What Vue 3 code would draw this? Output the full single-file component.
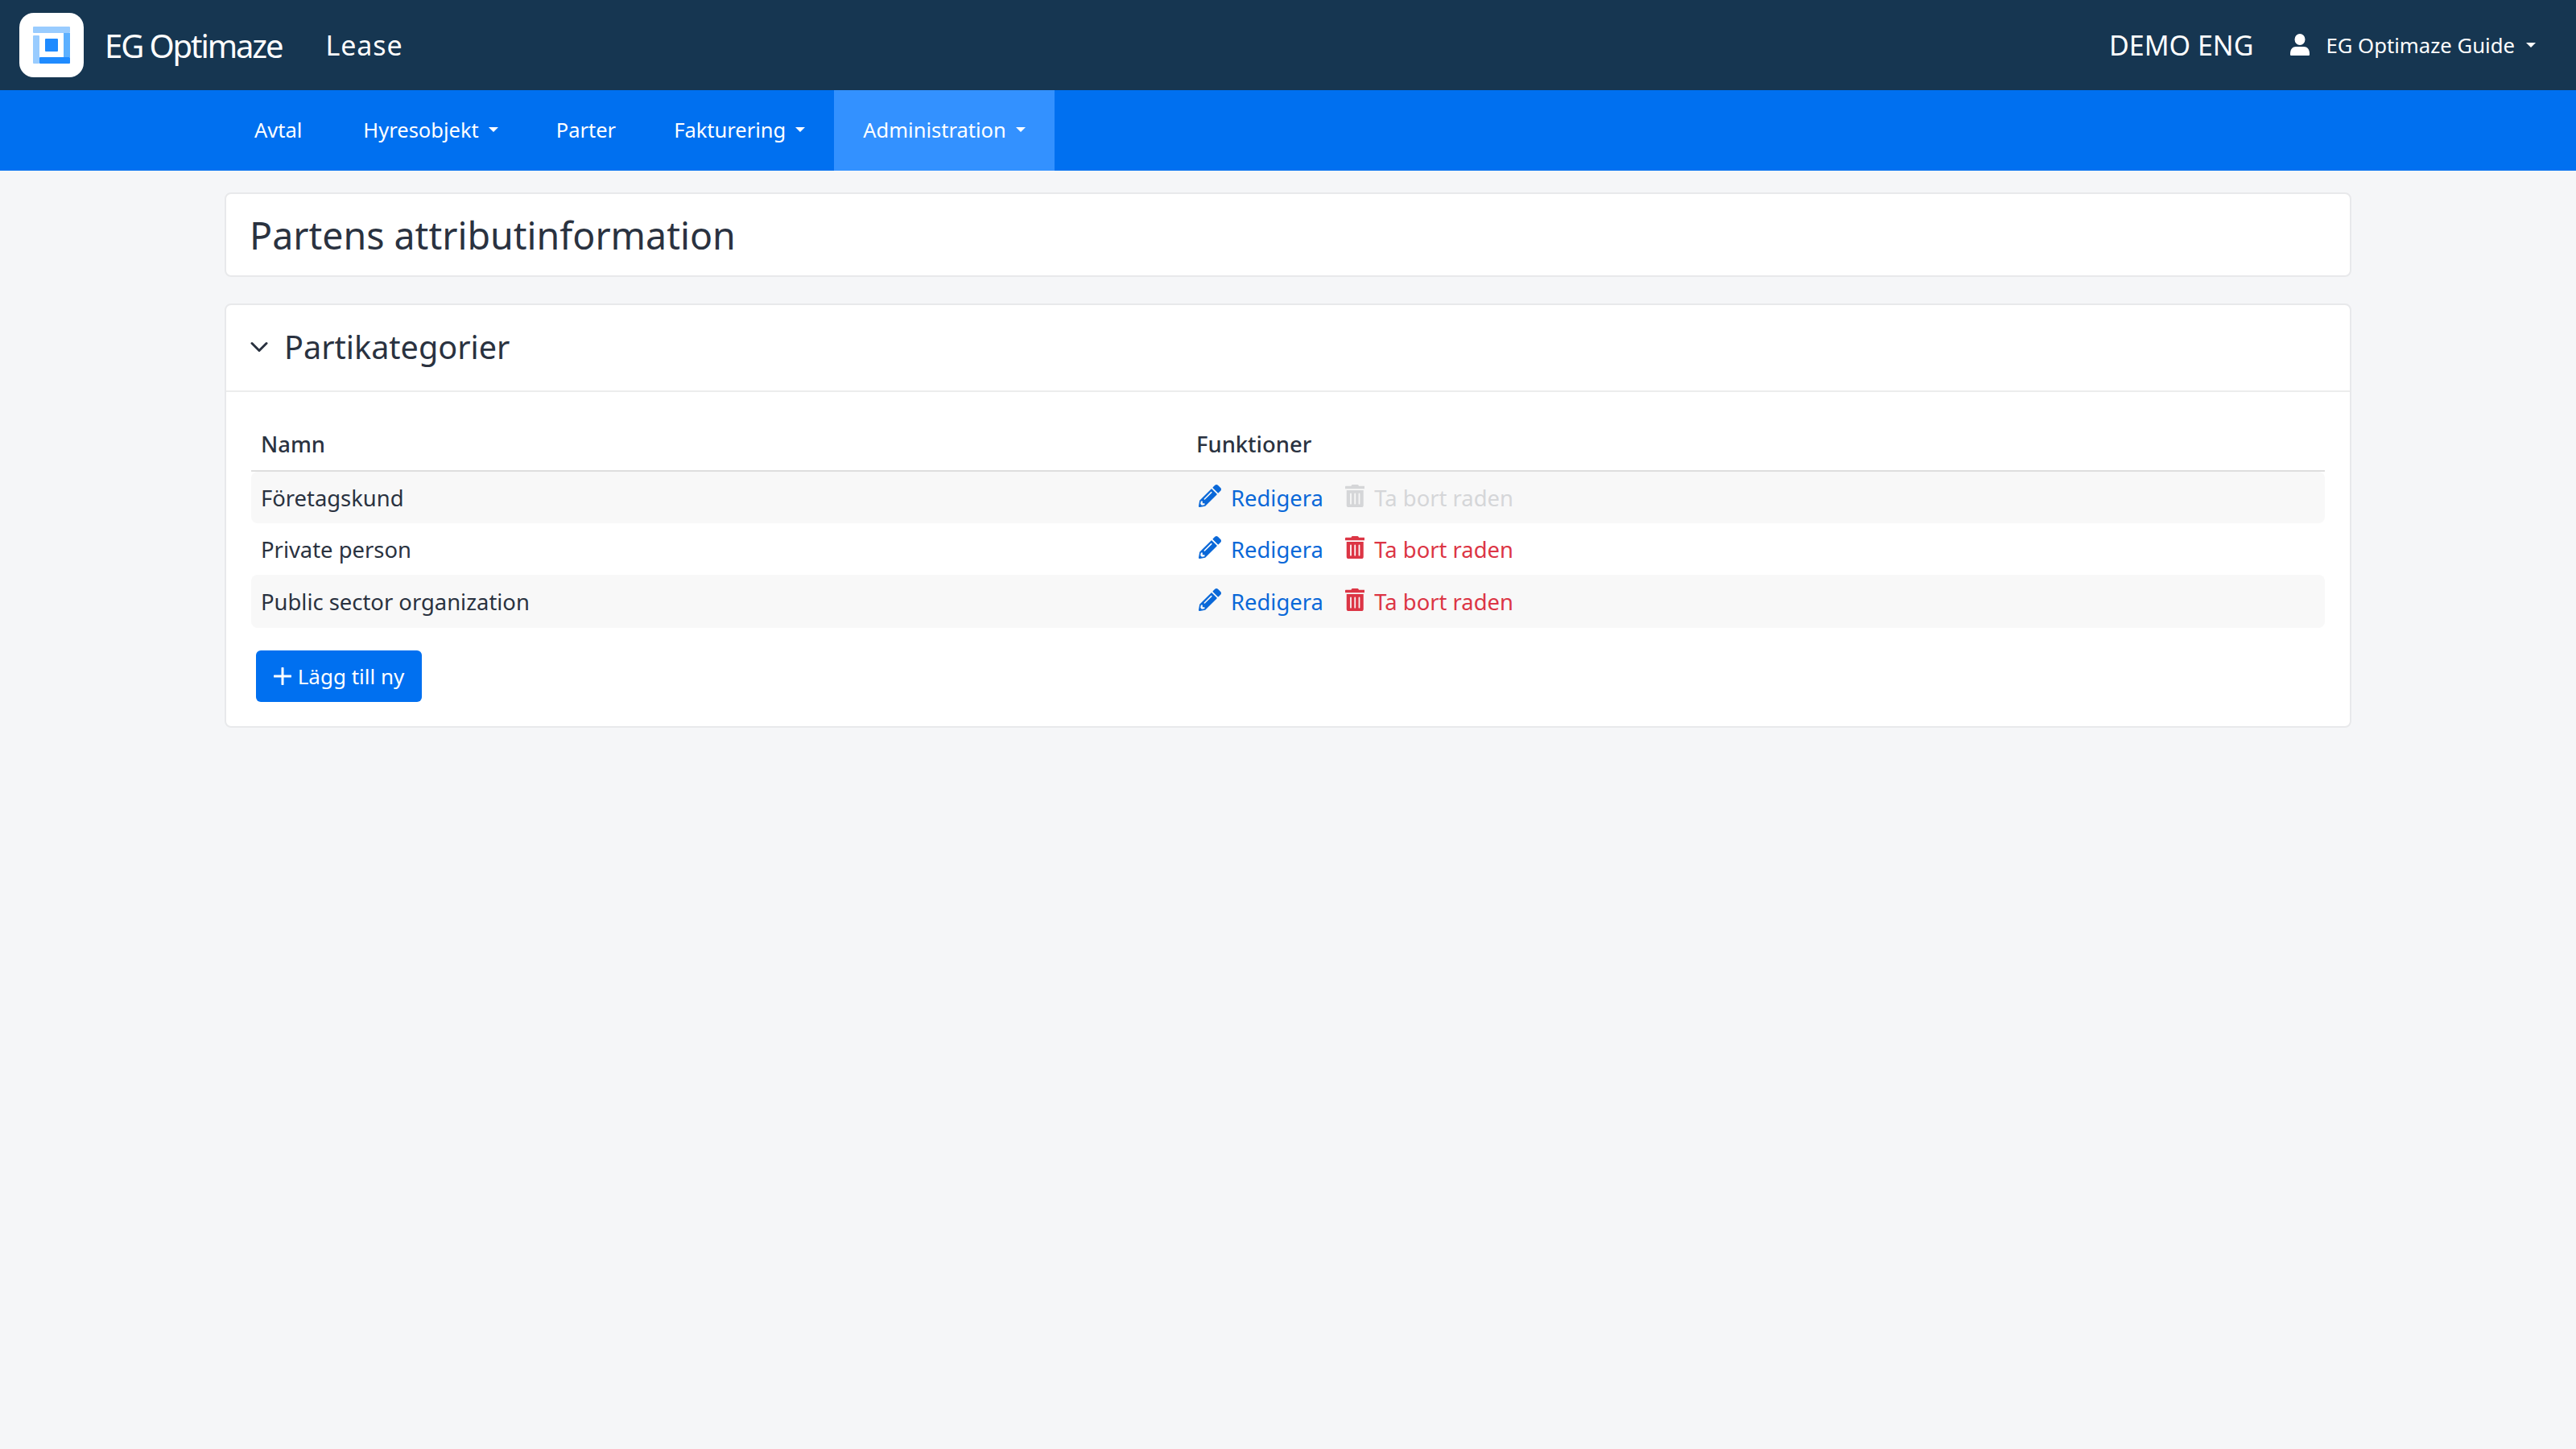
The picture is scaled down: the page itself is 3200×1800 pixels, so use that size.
<template>
  <div class="page">
    <header class="topbar">
      <div class="brand">
        <div class="logo">
          <svg width="46" height="46" viewBox="0 0 46 46">
            <rect x="0" y="0" width="46" height="8" rx="1" fill="#99ccff" />
            <rect x="0" y="11" width="8" height="35" rx="1" fill="#99ccff" />
            <rect x="38" y="8" width="8" height="30" fill="#5cb0ff" />
            <rect x="8" y="38" width="38" height="8" rx="1" fill="#1f8bff" />
            <rect x="15" y="15" width="16" height="16" rx="1" fill="#1f8bff" />
          </svg>
        </div>
        <span class="brand-name">EG Optimaze</span>
        <span class="product">Lease</span>
      </div>
      <div class="top-right">
        <span class="tenant">DEMO ENG</span>
        <svg class="user-icon" width="24" height="28" viewBox="0 0 24 28">
          <ellipse cx="12" cy="7" rx="6.5" ry="7" fill="#fff" />
          <path d="M1 27c-1 0-1-1-1-2 0-6 3-9 7-9h10c4 0 7 3 7 9 0 1 0 2-1 2z" fill="#fff" />
        </svg>
        <span class="user-name">EG Optimaze Guide</span>
        <span class="caret user-caret"></span>
      </div>
    </header>

    <nav class="mainnav">
      <a v-for="item in navItems" :key="item.label" class="nav-item" :class="{ active: item.active }">
        {{ item.label }}
        <span v-if="item.menu" class="caret"></span>
      </a>
    </nav>

    <main class="content">
      <section class="card title-card">
        <h1>Partens attributinformation</h1>
      </section>

      <section class="card">
        <div class="card-head">
          <svg class="chevron" width="22" height="14" viewBox="0 0 22 14">
            <path d="M2 2.5l9 9 9-9" fill="none" stroke="#2a3240" stroke-width="3" stroke-linecap="round" stroke-linejoin="round" />
          </svg>
          <h2>Partikategorier</h2>
        </div>
        <div class="card-body">
          <div class="row head-row">
            <div class="col-name">Namn</div>
            <div class="col-func">Funktioner</div>
          </div>
          <div v-for="row in rows" :key="row.name" class="row">
            <div class="col-name">{{ row.name }}</div>
            <div class="col-func">
              <a class="action edit">
                <svg width="28" height="28" viewBox="0 0 512 512">
                  <path fill="currentColor" d="M497.9 142.1l-46.1 46.1c-4.7 4.7-12.3 4.7-17 0l-111-111c-4.7-4.7-4.7-12.3 0-17l46.1-46.1c18.7-18.7 49.1-18.7 67.9 0l60.1 60.1c18.8 18.7 18.8 49.1 0 67.9zM284.2 99.8L21.6 362.4.4 483.9c-2.9 16.4 11.4 30.6 27.8 27.8l121.5-21.3 262.6-262.6c4.7-4.7 4.7-12.3 0-17l-111-111c-4.8-4.7-12.4-4.7-17.1 0zM124.1 339.9c-5.5-5.5-5.5-14.3 0-19.8l154-154c5.5-5.5 14.3-5.5 19.8 0s5.5 14.3 0 19.8l-154 154c-5.5 5.5-14.3 5.5-19.8 0zM88 424h48v36.3l-64.5 11.3-31.1-31.1L51.7 376H88v48z" />
                </svg>
                Redigera
              </a>
              <a class="action remove" :class="{ disabled: row.locked }">
                <svg width="24.5" height="28" viewBox="0 0 448 512">
                  <path fill="currentColor" d="M32 464a48 48 0 0 0 48 48h288a48 48 0 0 0 48-48V128H32zm272-256a16 16 0 0 1 32 0v224a16 16 0 0 1-32 0zm-96 0a16 16 0 0 1 32 0v224a16 16 0 0 1-32 0zm-96 0a16 16 0 0 1 32 0v224a16 16 0 0 1-32 0zM432 32H312l-9.4-18.7A24 24 0 0 0 281.1 0H166.8a23.72 23.72 0 0 0-21.4 13.3L136 32H16A16 16 0 0 0 0 48v32a16 16 0 0 0 16 16h416a16 16 0 0 0 16-16V48a16 16 0 0 0-16-16z" />
                </svg>
                Ta bort raden
              </a>
            </div>
          </div>
          <button class="add-btn">
            <svg width="22" height="22" viewBox="0 0 22 22">
              <path d="M11 1v20M1 11h20" stroke="#fff" stroke-width="3" stroke-linecap="round" />
            </svg>
            Lägg till ny
          </button>
        </div>
      </section>
    </main>
  </div>
</template>

<script setup>
const navItems = [
  { label: 'Avtal' },
  { label: 'Hyresobjekt', menu: true },
  { label: 'Parter' },
  { label: 'Fakturering', menu: true },
  { label: 'Administration', menu: true, active: true },
]

const rows = [
  { name: 'Företagskund', locked: true },
  { name: 'Private person' },
  { name: 'Public sector organization' },
]
</script>

<style>
html,
body {
  margin: 0;
  background: #f5f6f8;
}
</style>

<style scoped>
.page {
  min-height: 1800px;
  background: #f5f6f8;
  font-family: 'Noto Sans', 'Open Sans', sans-serif;
  color: #2a3240;
}

.topbar {
  height: 112px;
  background: #163651;
  color: #fff;
  display: flex;
  justify-content: space-between;
  align-items: center;
  padding: 0 50px 0 24px;
}

.brand {
  display: flex;
  align-items: center;
}

.logo {
  width: 80px;
  height: 80px;
  background: #fff;
  border-radius: 18px;
  display: flex;
  align-items: center;
  justify-content: center;
}

.brand-name {
  margin-left: 26px;
  font-size: 40px;
  letter-spacing: -2.1px;
}

.product {
  margin-left: 54px;
  font-size: 34px;
  letter-spacing: 0.9px;
}

.top-right {
  display: flex;
  align-items: center;
}

.tenant {
  font-size: 34px;
  margin-right: 46px;
}

.user-name {
  font-size: 25.7px;
  margin-left: 20px;
}

.caret {
  display: inline-block;
  width: 0;
  height: 0;
  margin-left: 6px;
  border-left: 6px solid transparent;
  border-right: 6px solid transparent;
  border-top: 6px solid #fff;
  vertical-align: middle;
}

.user-caret {
  margin-left: 14px;
}

.mainnav {
  height: 100px;
  background: #0070f0;
  display: flex;
  padding-left: 280px;
}

.nav-item {
  display: flex;
  align-items: center;
  gap: 6px;
  padding: 0 36px 2px;
  color: #fff;
  font-size: 25.5px;
}

.nav-item:first-child {
  padding-right: 40px;
}

.nav-item.active {
  background: #3391ff;
}

.content {
  padding: 27px 279px 0;
  display: flex;
  flex-direction: column;
  gap: 33px;
}

.card {
  background: #fff;
  border: 2px solid #e8e9eb;
  border-radius: 8px;
}

.title-card {
  height: 105px;
  box-sizing: border-box;
  display: flex;
  align-items: center;
  padding-left: 29px;
}

h1 {
  margin: 0;
  font-size: 46.5px;
  font-weight: 400;
}

.card-head {
  height: 108px;
  box-sizing: border-box;
  display: flex;
  align-items: center;
  padding: 0 0 3px 30px;
  border-bottom: 2px solid #eceded;
}

.chevron {
  margin-right: 20px;
}

h2 {
  margin: 0;
  font-size: 39.6px;
  font-weight: 400;
}

.card-body {
  padding: 31px 31px 30px;
}

.row {
  display: flex;
  align-items: center;
  height: 64px;
  font-size: 27.4px;
}

.row:last-of-type {
  height: 66px;
}

.row:nth-of-type(even) {
  background: #f8f8f8;
  border-radius: 8px;
}

.head-row {
  height: 66px;
  font-weight: 500;
  border-bottom: 2px solid #dedede;
}

.col-name {
  width: 1174px;
  padding-left: 12px;
  box-sizing: border-box;
}

.col-func {
  display: flex;
  align-items: center;
}

.action {
  display: inline-flex;
  align-items: center;
  gap: 12px;
}

.action svg {
  margin-bottom: 4px;
}

.edit {
  color: #0a68d8;
  margin: 0 27px 0 3px;
}

.remove {
  color: #dc3545;
}

.remove.disabled {
  color: #d5d6d8;
}

.add-btn {
  margin-top: 28px;
  width: 206px;
  height: 64px;
  padding: 0;
  margin-left: 6px;
  background: #0070f0;
  border: 0;
  border-radius: 6px;
  color: #fff;
  font-family: inherit;
  font-size: 26px;
  display: flex;
  align-items: center;
  justify-content: center;
  gap: 8px;
}
</style>
